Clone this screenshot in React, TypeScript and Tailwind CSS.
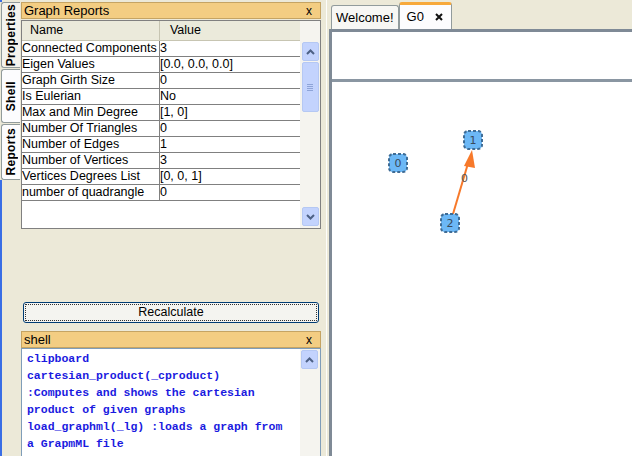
import React from "react";

const rows: [string, string][] = [
  ["Connected Components", "3"],
  ["Eigen Values", "[0.0, 0.0, 0.0]"],
  ["Graph Girth Size", "0"],
  ["Is Eulerian", "No"],
  ["Max and Min Degree", "[1, 0]"],
  ["Number Of Triangles", "0"],
  ["Number of Edges", "1"],
  ["Number of Vertices", "3"],
  ["Vertices Degrees List", "[0, 0, 1]"],
  ["number of quadrangle", "0"],
];

const shellLines = [
  "clipboard",
  "cartesian_product(_cproduct)",
  ":Computes and shows the cartesian",
  "product of given graphs",
  "load_graphml(_lg) :loads a graph from",
  "a GrapmML file",
  "print_info(_pi) :prints graph info",
];

function ScrollBtn({ dir }: { dir: "up" | "down" }) {
  return (
    <div className="flex h-[19px] w-[17px] items-center justify-center rounded-[2px] border border-[#b5c8f3] bg-[#c3d3fd]">
      <svg width="9" height="6" viewBox="0 0 9 6">
        <path
          d={dir === "up" ? "M1 5 L4.5 1.5 L8 5" : "M1 1 L4.5 4.5 L8 1"}
          stroke="#4d6185"
          strokeWidth="2"
          fill="none"
        />
      </svg>
    </div>
  );
}

function TitleBar({ title }: { title: string }) {
  return (
    <div className="flex h-[17px] items-center justify-between border border-[#c5a463] bg-[#f3cd82] pl-[2px] pr-[8px] text-[13px] leading-none text-black">
      <span>{title}</span>
      <span className="text-[12px]">x</span>
    </div>
  );
}

function SideTab({ label, h, active }: { label: string; h: number; active?: boolean }) {
  return (
    <div
      className={`flex w-[19px] items-center justify-center rounded-l-[3px] border border-r-0 border-[#919b9c] ${
        active ? "bg-[#fcfcfe]" : "bg-[#f4f3ee]"
      }`}
      style={{ height: h }}
    >
      <span className="rotate-180 text-[12px] font-bold tracking-[0.3px] text-black [writing-mode:vertical-rl]">
        {label}
      </span>
    </div>
  );
}

function GraphCanvas() {
  return (
    <svg width="300" height="374" className="block">
      <line x1="121" y1="132" x2="137" y2="78" stroke="#f7792a" strokeWidth="2" />
      <polygon points="140,68 132,84 143,86" fill="#f7792a" />
      <text x="129" y="100" fontSize="11" fill="#555" fontFamily="DejaVu Sans, sans-serif">
        0
      </text>
      {[
        [66, 81, "0"],
        [141, 58, "1"],
        [118, 141, "2"],
      ].map(([x, y, l]) => (
        <g key={l as string}>
          <rect
            x={(x as number) - 9}
            y={(y as number) - 9}
            width="18"
            height="18"
            rx="4"
            fill="#6cb8f6"
            stroke="#3f6c95"
            strokeWidth="2"
            strokeDasharray="3 2"
          />
          <text
            x={x as number}
            y={(y as number) + 4}
            textAnchor="middle"
            fontSize="11"
            fill="#3a4a5a"
            fontFamily="DejaVu Sans, sans-serif"
          >
            {l}
          </text>
        </g>
      ))}
    </svg>
  );
}

export default function App() {
  return (
    <div className="flex h-[456px] w-[632px] overflow-hidden bg-[#ece9d8] font-['Liberation_Sans',sans-serif] text-black">
      {/* vertical tab strip */}
      <div className="flex w-[21px] flex-col border-l-2 border-[#3a6ee5] pt-[2px]">
        <div className="-ml-[2px] flex flex-col gap-[1px] bg-[#ece9d8] pl-[1px]">
          <SideTab label="Properties" h={66} />
          <SideTab label="Shell" h={54} active />
          <SideTab label="Reports" h={56} active />
        </div>
      </div>

      {/* left panel */}
      <div className="flex w-[301px] flex-col pt-[2px]">
        <TitleBar title="Graph Reports" />
        <div className="mt-[1px] flex h-[209px] border border-[#808080] bg-white">
          <div className="flex flex-1 flex-col">
            <div className="flex h-[20px] border-b border-[#c7c5b2] bg-[#ebeadb] text-[12.5px]">
              <div className="flex w-[138px] items-center border-r border-[#c7c5b2] pl-[8px]">Name</div>
              <div className="flex flex-1 items-center pl-[10px]">Value</div>
            </div>
            {rows.map(([n, v]) => (
              <div key={n} className="flex h-[16px] border-b border-[#808080] text-[12.5px] leading-[15px]">
                <div className="w-[138px] overflow-hidden whitespace-nowrap border-r border-[#808080]">{n}</div>
                <div className="flex-1 whitespace-nowrap">{v}</div>
              </div>
            ))}
          </div>
          <div className="flex w-[20px] flex-col items-center justify-between bg-[#f5f4ef] pb-[2px] pt-[21px]">
            <div className="flex flex-col items-center">
              <ScrollBtn dir="up" />
              <div className="mt-[1px] flex h-[50px] w-[17px] items-center justify-center rounded-[2px] border border-[#b5c8f3] bg-[#c3d3fd]">
                <div className="flex flex-col gap-[1px]">
                  <div className="h-px w-[6px] bg-[#8ea4d8]" />
                  <div className="h-px w-[6px] bg-[#8ea4d8]" />
                  <div className="h-px w-[6px] bg-[#8ea4d8]" />
                  <div className="h-px w-[6px] bg-[#8ea4d8]" />
                </div>
              </div>
            </div>
            <ScrollBtn dir="down" />
          </div>
        </div>
        <div className="flex-1" />
        <div className="mx-[2px] mb-[8px] mt-[2px] flex h-[21px] items-center justify-center rounded-[3px] border border-[#003c74] bg-[#f4f4f0] text-[12.5px]">
          <div className="flex h-[17px] w-[292px] items-center justify-center border border-dotted border-[#333]">
            Recalculate
          </div>
        </div>
        <TitleBar title="shell" />
        <div className="flex h-[108px] overflow-hidden border border-b-0 border-[#7f9db9] bg-white">
          <div className="flex-1 pl-[5px] pt-[1px] font-['Liberation_Mono',monospace] text-[11.5px] font-bold leading-[17px] text-[#1a1ae0]">
            {shellLines.map((l, i) => (
              <div key={i} className="h-[17px] whitespace-pre">{l}</div>
            ))}
          </div>
          <div className="w-[20px] bg-[#f5f4ef] pl-[1px] pt-[1px]">
            <ScrollBtn dir="up" />
          </div>
        </div>
      </div>

      {/* splitter */}
      <div className="flex w-[8px] justify-end">
        <div className="w-[3px] border-l border-[#fdfdfb] bg-[#ece9d8]" />
      </div>

      {/* right area */}
      <div className="flex flex-1 flex-col">
        <div className="flex h-[29px] items-end pl-[2px] text-[13px]">
          <div className="flex h-[24px] items-center rounded-t-[3px] border border-b-0 border-[#919b9c] bg-[#f7f7f4] px-[4px]">
            Welcome!
          </div>
          <div className="flex h-[27px] items-center gap-[11px] rounded-t-[3px] border-x border-t-[3px] border-x-[#919b9c] border-t-[#f7a93b] bg-[#fcfcfe] pl-[7px] pr-[8px]">
            <span>G0</span>
            <svg width="8" height="8" viewBox="0 0 8 8">
              <path d="M1 1 L7 7 M7 1 L1 7" stroke="#111" strokeWidth="2" />
            </svg>
          </div>
        </div>
        <div className="flex flex-1 flex-col border-l-[3px] border-t-[3px] border-[#7f8a96] bg-white">
          <div className="h-[50px] border-b-[3px] border-[#8a96a2]" />
          <div className="flex-1">
            <GraphCanvas />
          </div>
        </div>
      </div>
    </div>
  );
}
